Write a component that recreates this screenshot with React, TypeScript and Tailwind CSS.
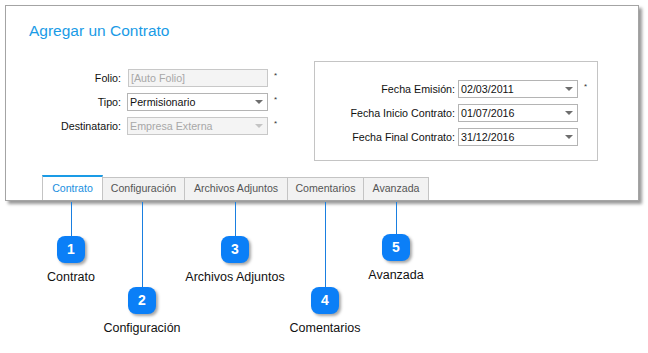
import { ReactNode } from 'react';

const tabs = [
  { label: 'Contrato', w: 61, active: true },
  { label: 'Configuración', w: 83 },
  { label: 'Archivos Adjuntos', w: 104 },
  { label: 'Comentarios', w: 77 },
  { label: 'Avanzada', w: 66 },
];

// callouts under the tabs: line x, badge top, label
const callouts = [
  { n: 1, x: 71, top: 236, label: 'Contrato' },
  { n: 2, x: 142, top: 287, label: 'Configuración' },
  { n: 3, x: 235, top: 236, label: 'Archivos Adjuntos' },
  { n: 4, x: 325, top: 287, label: 'Comentarios' },
  { n: 5, x: 396, top: 234, label: 'Avanzada' },
];

function Field({ value, disabled, arrow }: { value: string; disabled?: boolean; arrow?: boolean }) {
  return (
    <div
      className={`flex h-[18px] items-center justify-between border pl-[2px] pr-[4px] ${
        disabled ? 'border-[#c8c8c8] bg-[#f4f4f4] text-[#a8a8a8]' : 'border-[#b4b4b4] bg-white text-[#111]'
      }`}
    >
      <span className="leading-none">{value}</span>
      {arrow && (
        <span
          className={`h-0 w-0 border-x-[4px] border-t-[4px] border-x-transparent ${
            disabled ? 'border-t-[#c4c4c4]' : 'border-t-[#6e6e6e]'
          }`}
        />
      )}
    </div>
  );
}

function Row({ label, labelW, gap, children, star }: { label: string; labelW: number; gap: number; children: ReactNode; star?: boolean }) {
  return (
    <div className="flex items-center">
      <span className="text-right text-[#111]" style={{ width: labelW, marginRight: gap }}>
        {label}
      </span>
      {children}
      <span className="ml-[6px] -mt-[5px] w-[4px] text-[8px] text-[#333]">{star ? '*' : ''}</span>
    </div>
  );
}

export default function App() {
  return (
    <div className="relative h-[353px] w-[648px] bg-white pt-[5px] font-['Liberation_Sans',Arial,sans-serif]">
      <div className="ml-[5px] flex h-[196px] w-[634px] flex-col border border-[#a4a4a4] bg-white text-[10.7px] shadow-[3px_3px_3px_rgba(0,0,0,0.4)]">
        <h1 className="pl-[23px] pt-[15px] text-[15.5px] leading-[20px] text-[#1a9be6]">Agregar un Contrato</h1>

        <div className="mt-[20px] flex items-start">
          <div className="mt-[8px] flex flex-col gap-[6px]">
            <Row label="Folio:" labelW={115} gap={7} star>
              <div className="w-[140px]">
                <Field value="[Auto Folio]" disabled />
              </div>
            </Row>
            <Row label="Tipo:" labelW={115} gap={6} star>
              <div className="w-[141px]">
                <Field value="Permisionario" arrow />
              </div>
            </Row>
            <Row label="Destinatario:" labelW={115} gap={6} star>
              <div className="w-[141px]">
                <Field value="Empresa Externa" disabled arrow />
              </div>
            </Row>
          </div>

          <div className="ml-[36px] flex h-[100px] w-[284px] flex-col gap-[6px] border border-[#c4c4c4] pt-[18px]">
            <Row label="Fecha Emisión:" labelW={140} gap={3} star>
              <div className="w-[120px]">
                <Field value="02/03/2011" arrow />
              </div>
            </Row>
            <Row label="Fecha Inicio Contrato:" labelW={140} gap={3}>
              <div className="w-[120px]">
                <Field value="01/07/2016" arrow />
              </div>
            </Row>
            <Row label="Fecha Final Contrato:" labelW={140} gap={3}>
              <div className="w-[120px]">
                <Field value="31/12/2016" arrow />
              </div>
            </Row>
          </div>
        </div>

        <div className="mt-auto flex items-end pl-[36px] text-[10.6px]">
          {tabs.map((t) =>
            t.active ? (
              <div
                key={t.label}
                style={{ width: t.w }}
                className="flex h-[25px] items-center justify-center border-x border-t-2 border-x-[#c4c4c4] border-t-[#1a9be6] bg-white text-[#1a8fe0]"
              >
                {t.label}
              </div>
            ) : (
              <div
                key={t.label}
                style={{ width: t.w }}
                className="-ml-px flex h-[23px] items-center justify-center border-x border-t border-[#c4c4c4] bg-[#f2f2f2] text-[#555]"
              >
                {t.label}
              </div>
            )
          )}
        </div>
      </div>

      {callouts.map((c) => (
        <div key={c.n}>
          <div className="absolute w-px bg-[#1a7fe0]" style={{ left: c.x, top: 202, height: c.top - 202 }} />
          <div
            className="absolute flex h-[27px] w-[28px] items-center justify-center rounded-[8px] bg-[#0b7ff7] text-[14px] font-bold text-white shadow-[2px_2px_3px_rgba(0,0,0,0.35)]"
            style={{ left: c.x - 14, top: c.top }}
          >
            {c.n}
          </div>
          <div
            className="absolute w-[140px] text-center text-[12.5px] leading-[14px] text-[#111]"
            style={{ left: c.x - 70, top: c.top + 34 }}
          >
            {c.label}
          </div>
        </div>
      ))}
    </div>
  );
}
